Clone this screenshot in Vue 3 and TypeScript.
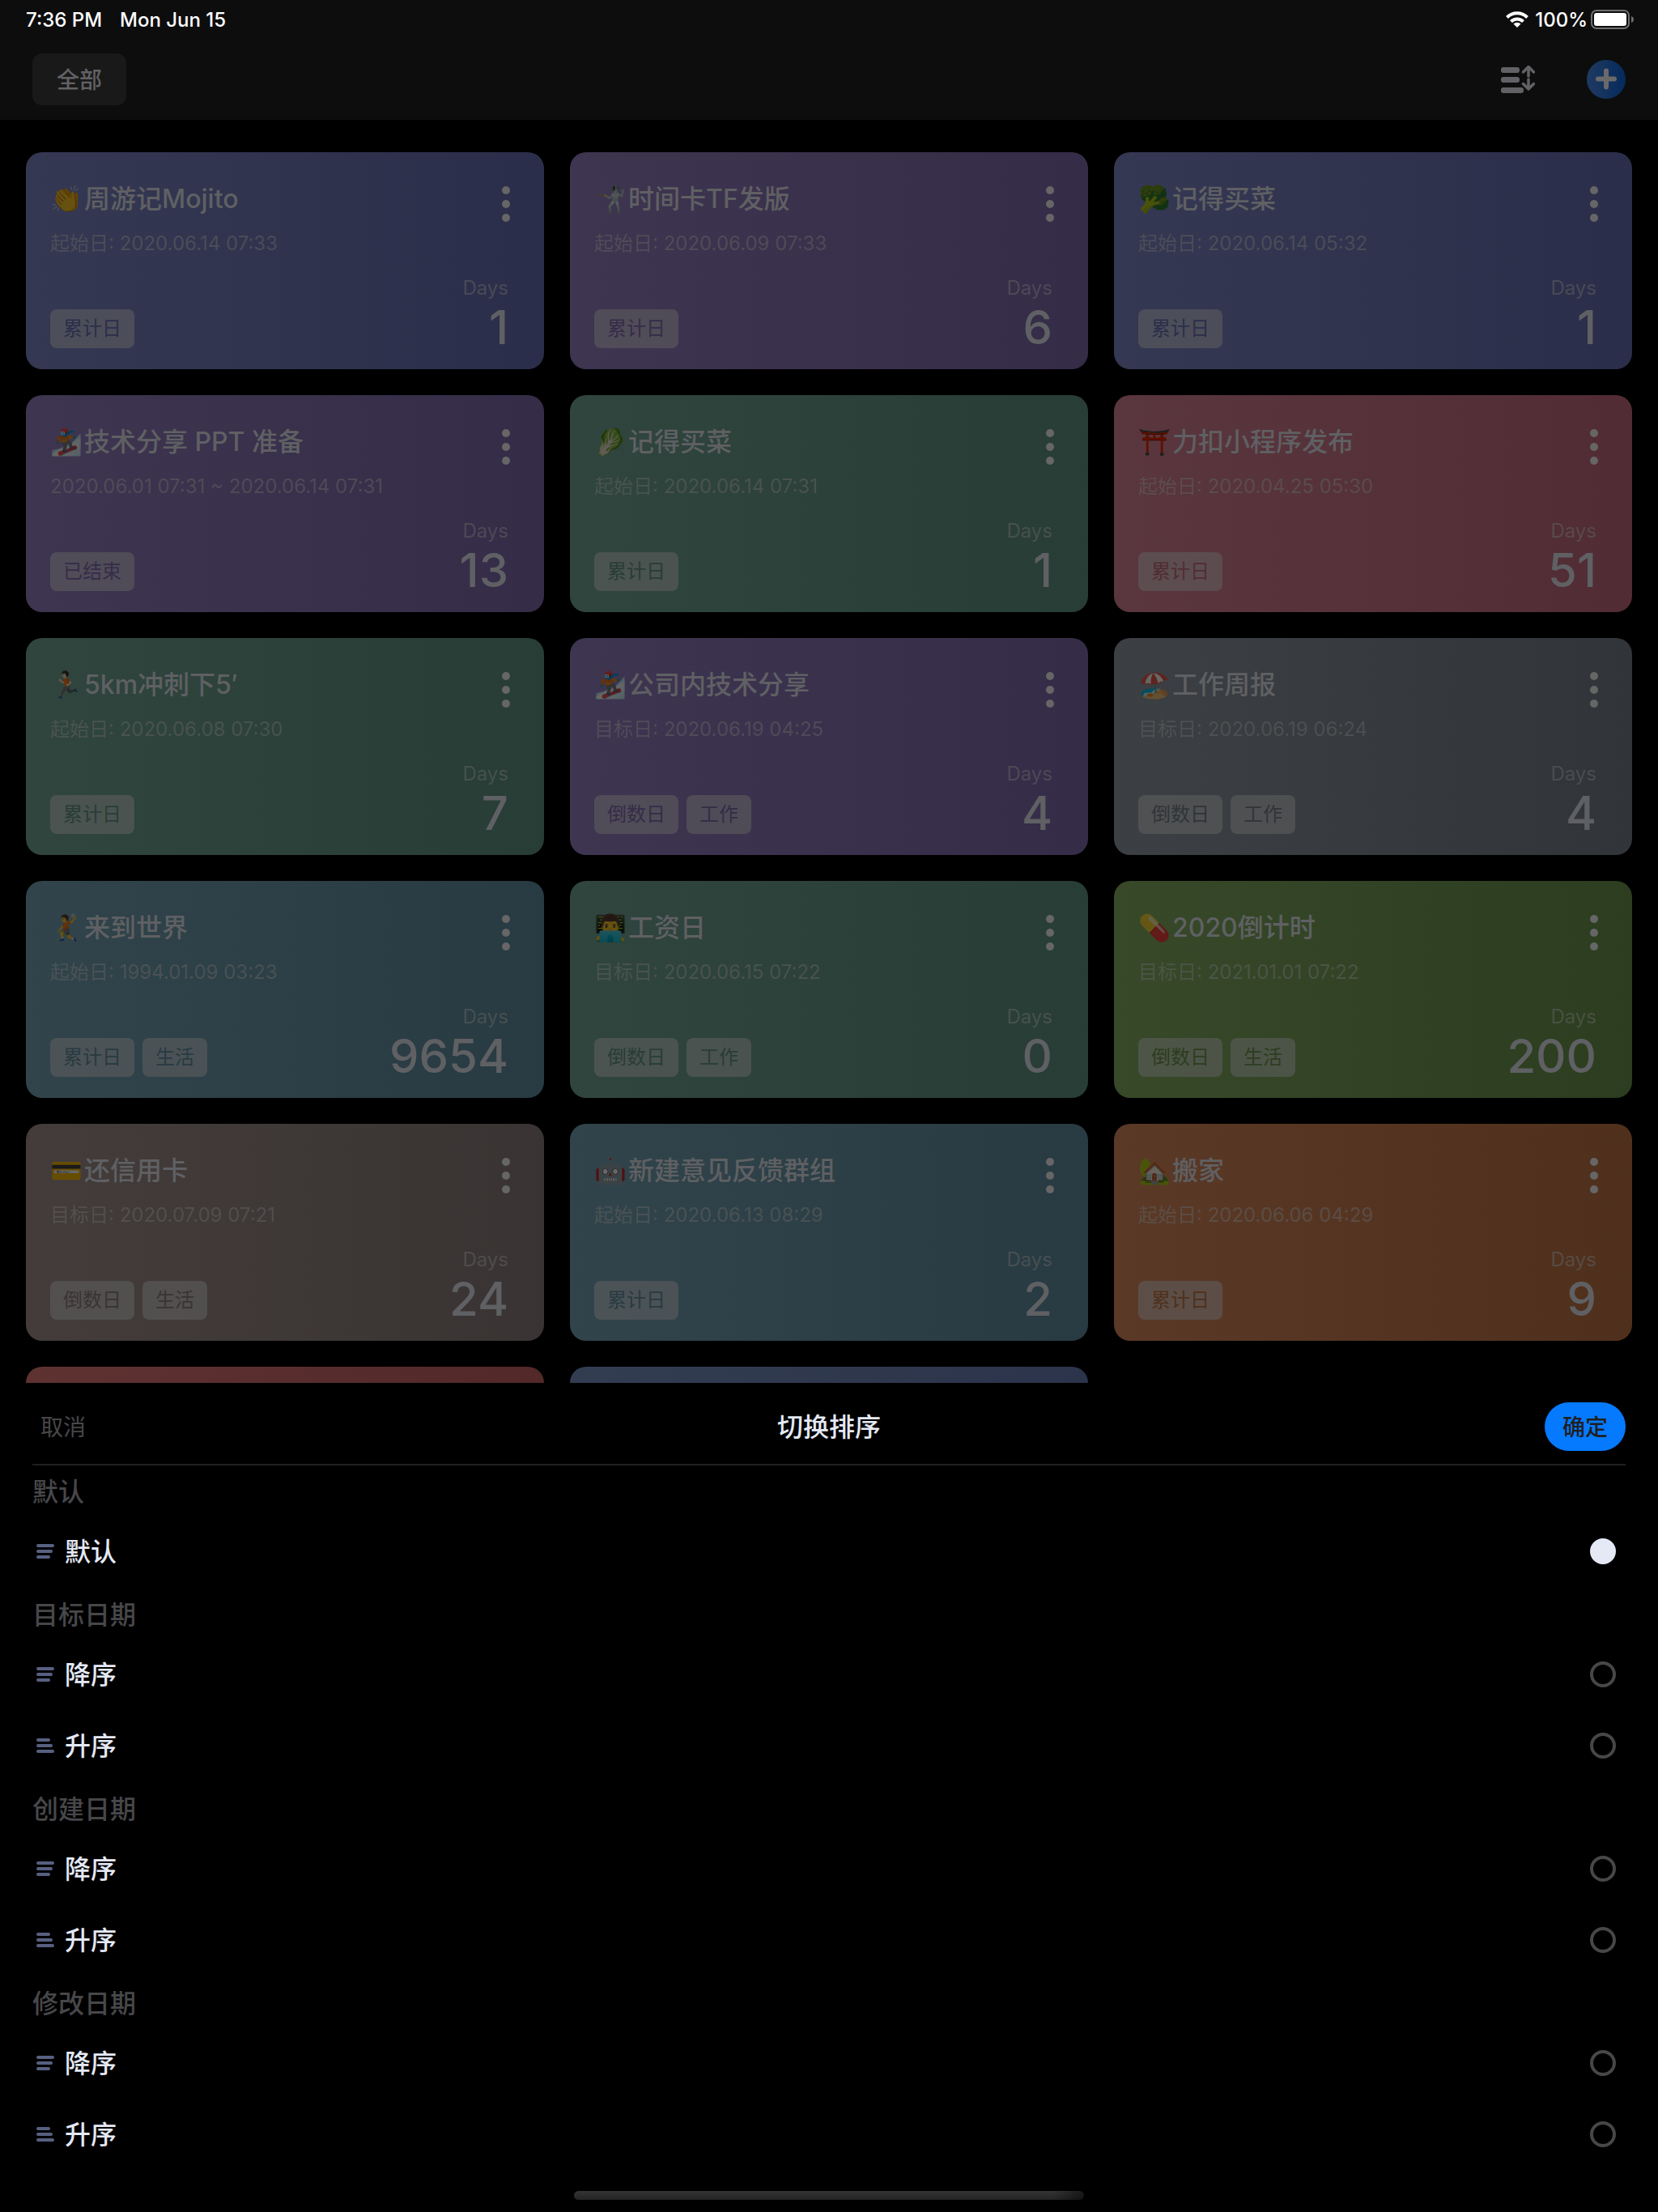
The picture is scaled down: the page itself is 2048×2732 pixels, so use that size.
<script setup lang="ts">
import { ref } from 'vue'

interface Card {
  emoji: string
  title: string
  date: string
  tags: string[]
  days: number
  tone: string
}

const cards: Card[] = [
  { emoji: '👏', title: '周游记Mojito', date: '起始日: 2020.06.14 07:33', tags: ['累计日'], days: 1, tone: 'indigo' },
  { emoji: '🤺', title: '时间卡TF发版', date: '起始日: 2020.06.09 07:33', tags: ['累计日'], days: 6, tone: 'plum' },
  { emoji: '🥦', title: '记得买菜', date: '起始日: 2020.06.14 05:32', tags: ['累计日'], days: 1, tone: 'indigo' },
  { emoji: '🏂', title: '技术分享 PPT 准备', date: '2020.06.01 07:31 ~ 2020.06.14 07:31', tags: ['已结束'], days: 13, tone: 'plum' },
  { emoji: '🥬', title: '记得买菜', date: '起始日: 2020.06.14 07:31', tags: ['累计日'], days: 1, tone: 'green' },
  { emoji: '⛩️', title: '力扣小程序发布', date: '起始日: 2020.04.25 05:30', tags: ['累计日'], days: 51, tone: 'rose' },
  { emoji: '🏃🏻', title: '5km冲刺下5′', date: '起始日: 2020.06.08 07:30', tags: ['累计日'], days: 7, tone: 'green' },
  { emoji: '🏂', title: '公司内技术分享', date: '目标日: 2020.06.19 04:25', tags: ['倒数日', '工作'], days: 4, tone: 'plum' },
  { emoji: '🏖️', title: '工作周报', date: '目标日: 2020.06.19 06:24', tags: ['倒数日', '工作'], days: 4, tone: 'gray' },
  { emoji: '🤾', title: '来到世界', date: '起始日: 1994.01.09 03:23', tags: ['累计日', '生活'], days: 9654, tone: 'blue' },
  { emoji: '👨‍💻', title: '工资日', date: '目标日: 2020.06.15 07:22', tags: ['倒数日', '工作'], days: 0, tone: 'green' },
  { emoji: '💊', title: '2020倒计时', date: '目标日: 2021.01.01 07:22', tags: ['倒数日', '生活'], days: 200, tone: 'olive' },
  { emoji: '💳', title: '还信用卡', date: '目标日: 2020.07.09 07:21', tags: ['倒数日', '生活'], days: 24, tone: 'brown' },
  { emoji: '🤖', title: '新建意见反馈群组', date: '起始日: 2020.06.13 08:29', tags: ['累计日'], days: 2, tone: 'blue' },
  { emoji: '🏡', title: '搬家', date: '起始日: 2020.06.06 04:29', tags: ['累计日'], days: 9, tone: 'orange' },
]

const sortGroups = [
  { title: '默认', options: [{ id: 'default', label: '默认', asc: false }] },
  { title: '目标日期', options: [{ id: 'target-desc', label: '降序', asc: false }, { id: 'target-asc', label: '升序', asc: true }] },
  { title: '创建日期', options: [{ id: 'created-desc', label: '降序', asc: false }, { id: 'created-asc', label: '升序', asc: true }] },
  { title: '修改日期', options: [{ id: 'edited-desc', label: '降序', asc: false }, { id: 'edited-asc', label: '升序', asc: true }] },
]

const sort = ref('default')
</script>

<template>
  <div class="screen">
    <header class="top">
      <div class="status">
        <span>7:36 PM</span>
        <span class="date">Mon Jun 15</span>
        <svg class="wifi" width="28" height="20" viewBox="0 0 28 20" aria-hidden="true">
          <path d="M1.500 7.500a17.500 17.500 0 0 1 25 0M6.500 12.600a10.600 10.600 0 0 1 15 0" fill="none" stroke="#fff" stroke-width="4" />
          <path d="M14 20l-4.500-4.500a6.500 6.500 0 0 1 9 0z" fill="#fff" />
        </svg>
        <span>100%</span>
        <svg class="battery" width="53" height="24" viewBox="0 0 53 24" aria-hidden="true">
          <rect x="1" y="1" width="46" height="22" rx="6" fill="none" stroke="#6e6e6e" stroke-width="2" />
          <rect x="4" y="4" width="40" height="16" rx="3" fill="#fff" />
          <path d="M50 8q3 1 3 4t-3 4z" fill="#6e6e6e" />
        </svg>
      </div>
      <div class="bar">
        <button class="filter" type="button">全部</button>
        <button class="icon-btn sort-btn" type="button" aria-label="切换排序">
          <svg width="42" height="34" viewBox="0 0 42 34">
            <g fill="#626266">
              <rect y="2" width="23" height="7" rx="3" />
              <rect y="14" width="23" height="7" rx="3" />
              <rect y="27" width="28" height="7" rx="3" />
            </g>
            <path d="M34 13V2M27.500 8L34 1.500L40.500 8M34 17v11M27.500 22.500L34 29l6.500-6.500" fill="none" stroke="#626266" stroke-width="3.500" stroke-linecap="round" stroke-linejoin="round" />
          </svg>
        </button>
        <button class="icon-btn" type="button" aria-label="新建">
          <svg width="48" height="48" viewBox="0 0 48 48">
            <defs>
              <linearGradient id="add" x1="0" x2="1" y1="0" y2="0">
                <stop offset="0" stop-color="#1f3a61" />
                <stop offset="1" stop-color="#052a5c" />
              </linearGradient>
            </defs>
            <circle cx="24" cy="24" r="24" fill="url(#add)" />
            <path d="M24 13.500v20M14 23.500h20" stroke="#6a6a6a" stroke-width="6" stroke-linecap="round" />
          </svg>
        </button>
      </div>
    </header>

    <main class="board">
      <article v-for="(card, i) in cards" :key="i" class="card" :class="card.tone">
        <div class="head">
          <h2><span class="emoji">{{ card.emoji }}</span>{{ card.title }}</h2>
          <button class="more" type="button" aria-label="更多"><i></i><i></i><i></i></button>
        </div>
        <p class="when">{{ card.date }}</p>
        <div class="foot">
          <div class="tags"><span v-for="tag in card.tags" :key="tag" class="tag">{{ tag }}</span></div>
          <div class="count"><span class="unit">Days</span><strong>{{ card.days }}</strong></div>
        </div>
      </article>
      <article class="card red"></article>
      <article class="card navy"></article>
    </main>

    <section class="sheet">
      <div class="sheet-head">
        <button class="cancel" type="button">取消</button>
        <h1>切换排序</h1>
        <button class="confirm" type="button">确定</button>
      </div>
      <fieldset v-for="group in sortGroups" :key="group.title">
        <legend>{{ group.title }}</legend>
        <label v-for="option in group.options" :key="option.id" class="option">
          <svg width="22" height="18" viewBox="0 0 22 18" fill="#576080" aria-hidden="true">
            <rect :width="option.asc ? 17 : 22" height="4" rx="2" />
            <rect y="7" width="20" height="4" rx="2" />
            <rect y="14" :width="option.asc ? 22 : 17" height="4" rx="2" />
          </svg>
          <span class="name">{{ option.label }}</span>
          <input v-model="sort" type="radio" name="sort" :value="option.id" />
        </label>
      </fieldset>
      <div class="home"></div>
    </section>
  </div>
</template>

<style>
body {
  background: #000;
}
</style>

<style scoped>
.screen {
  display: flex;
  flex-direction: column;
  height: 100vh;
  background: #000;
  color: #5f6063;
  font-family: Inter, "Noto Sans CJK SC", sans-serif;
}
button {
  border: 0;
  padding: 0;
  background: none;
  color: inherit;
  font: inherit;
}
svg {
  display: block;
}
h1,
h2,
p {
  margin: 0;
}
.top {
  flex: none;
  height: 148px;
  background: #0d0d0d;
}
.status {
  display: flex;
  align-items: center;
  height: 48px;
  padding: 0 30px 0 32px;
  color: #fff;
  font-size: 24px;
  font-weight: 500;
}
.date {
  margin-left: 22px;
}
.wifi {
  margin: 0 8px 0 auto;
}
.battery {
  margin-left: 4px;
}
.bar {
  display: flex;
  align-items: center;
  height: 100px;
  padding: 0 40px;
}
.filter {
  height: 64px;
  padding: 0 30px 2px;
  border-radius: 12px;
  background: #191919;
  color: #626265;
  font-size: 28px;
  font-weight: 500;
}
.sort-btn {
  margin: 0 64px 0 auto;
}
.board {
  flex: 1;
  min-height: 0;
  overflow: hidden;
  display: grid;
  grid-template-columns: repeat(3, minmax(0, 1fr));
  grid-auto-rows: 268px;
  gap: 32px;
  padding: 40px 32px 0;
}
.card {
  display: flex;
  flex-direction: column;
  box-sizing: border-box;
  padding: 34px 44px 26px 30px;
  border-radius: 20px;
  background: linear-gradient(90deg, var(--from), var(--to));
}
.indigo { --from: #353852; --to: #2b2e4a; }
.plum { --from: #3e3550; --to: #352c48; }
.green { --from: #30453e; --to: #283d35; }
.rose { --from: #5a363e; --to: #512c34; }
.gray { --from: #3c3f43; --to: #313438; }
.blue { --from: #31444b; --to: #283a42; }
.olive { --from: #374929; --to: #2c3d20; }
.brown { --from: #433c3b; --to: #393433; }
.orange { --from: #5a3926; --to: #4f301c; }
.red { --from: #5f3232; --to: #522828; }
.navy { --from: #333d52; --to: #2b344a; }
.head {
  display: flex;
  justify-content: space-between;
  height: 48px;
}
h2 {
  display: flex;
  font-size: 32px;
  font-weight: 500;
  line-height: 48px;
  white-space: pre;
}
.emoji {
  width: 42px;
  filter: brightness(0.4);
}
.more {
  display: flex;
  flex-direction: column;
  justify-content: center;
  gap: 7px;
  height: 60px;
  margin-right: -2px;
}
.more i {
  flex: none;
  width: 10px;
  height: 10px;
  border-radius: 50%;
  background: #666;
}
.when {
  margin-top: 13px;
  font-size: 24px;
  line-height: 36px;
  color: rgba(94, 95, 95, 0.58);
}
.foot {
  display: flex;
  justify-content: space-between;
  align-items: flex-end;
  margin-top: auto;
}
.tags {
  display: flex;
  gap: 10px;
}
.tag {
  padding: 0 16px;
  border-radius: 8px;
  background: rgba(94, 95, 95, 0.58);
  color: var(--to);
  font-size: 24px;
  line-height: 48px;
}
.count {
  display: flex;
  flex-direction: column;
  align-items: flex-end;
  margin-bottom: -2px;
}
.unit {
  color: rgba(94, 95, 95, 0.58);
  font-size: 24px;
  line-height: 40px;
}
strong {
  font-size: 58px;
  font-weight: 500;
  line-height: 56px;
}
.sheet {
  flex: none;
  padding: 0 40px;
  background: #000;
}
.sheet-head {
  display: grid;
  grid-template-columns: 1fr auto 1fr;
  align-items: center;
  height: 100px;
  padding-top: 8px;
  box-sizing: border-box;
  box-shadow: 0 2px 0 #1f1f1f;
}
h1 {
  padding-bottom: 4px;
  color: #e4e9f5;
  font-size: 32px;
  font-weight: 500;
}
.cancel {
  justify-self: start;
  padding: 0 10px 2px;
  color: #47474a;
  font-size: 28px;
}
.confirm {
  justify-self: end;
  height: 60px;
  padding: 0 22px 2px;
  border-radius: 30px;
  background: #067aff;
  color: #1f1f1f;
  font-size: 28px;
  font-weight: 500;
}
fieldset {
  margin: 0;
  padding: 0;
  border: 0;
}
legend {
  padding: 6px 0 0;
  color: #47474a;
  font-size: 32px;
  font-weight: 500;
  line-height: 58px;
}
.option {
  display: flex;
  align-items: center;
  gap: 13px;
  height: 88px;
  padding: 0 12px 0 5px;
  color: #e4e9f5;
  font-size: 32px;
  font-weight: 500;
}
.name {
  padding-bottom: 4px;
}
input {
  appearance: none;
  box-sizing: border-box;
  width: 32px;
  height: 32px;
  margin: 0 0 0 auto;
  border: 4px solid #47474a;
  border-radius: 50%;
}
input:checked {
  border-color: #e4e9f5;
  background: #e4e9f5;
}
.home {
  width: 32%;
  height: 11px;
  margin: 26px auto 15px;
  border-radius: 6px;
  background:
    linear-gradient(90deg, transparent 94%, rgba(0, 0, 0, 0.5)),
    linear-gradient(#343434, #242424);
}
</style>
